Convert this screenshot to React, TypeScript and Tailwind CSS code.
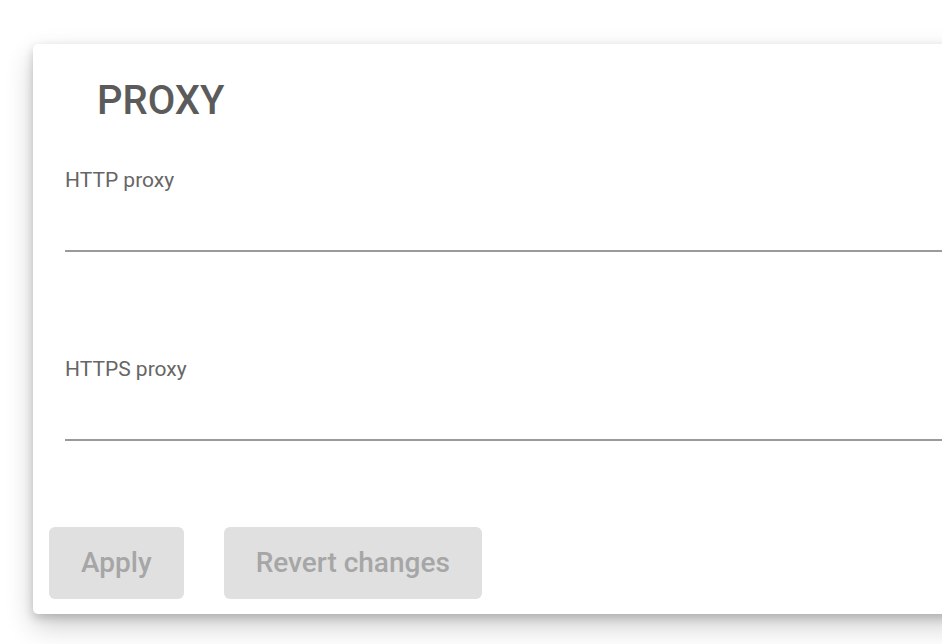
export default function App() {
  const fields = ['HTTP proxy', 'HTTPS proxy'];

  return (
    <div className="w-[942px] h-[644px] overflow-hidden bg-white" style={{ fontFamily: 'Roboto, "Liberation Sans", sans-serif' }}>
      <div className="ml-[33px] mt-[44px] w-[1000px] bg-white rounded-[5px] shadow-[0_12px_28px_rgba(0,0,0,0.2),0_4px_10px_rgba(0,0,0,0.18)] flex flex-col pt-[33px] pb-[15px]">
        {/* Title */}
        <h2 className="pl-[64px] text-[40px] leading-[48px] font-medium text-[#5b5b5b]">PROXY</h2>

        {/* Fields */}
        <div className="mt-[43px] pl-[32px] flex flex-col gap-[105px]">
          {fields.map((label) => (
            <div key={label} className="flex flex-col">
              <label className="text-[21px] leading-[24px] text-[#666666]">{label}</label>
              <input
                type="text"
                className="h-[60px] w-full border-b-2 border-[#9a9a9a] bg-transparent outline-none"
              />
            </div>
          ))}
        </div>

        {/* Actions */}
        <div className="mt-[86px] pl-[16px] flex gap-[40px]">
          <button className="h-[72px] px-[32px] rounded-[6px] bg-[#e0e0e0] text-[#a6a6a6] text-[28px] font-medium">
            Apply
          </button>
          <button className="h-[72px] px-[32px] rounded-[6px] bg-[#e0e0e0] text-[#a6a6a6] text-[28px] font-medium">
            Revert changes
          </button>
        </div>
      </div>
    </div>
  );
}
